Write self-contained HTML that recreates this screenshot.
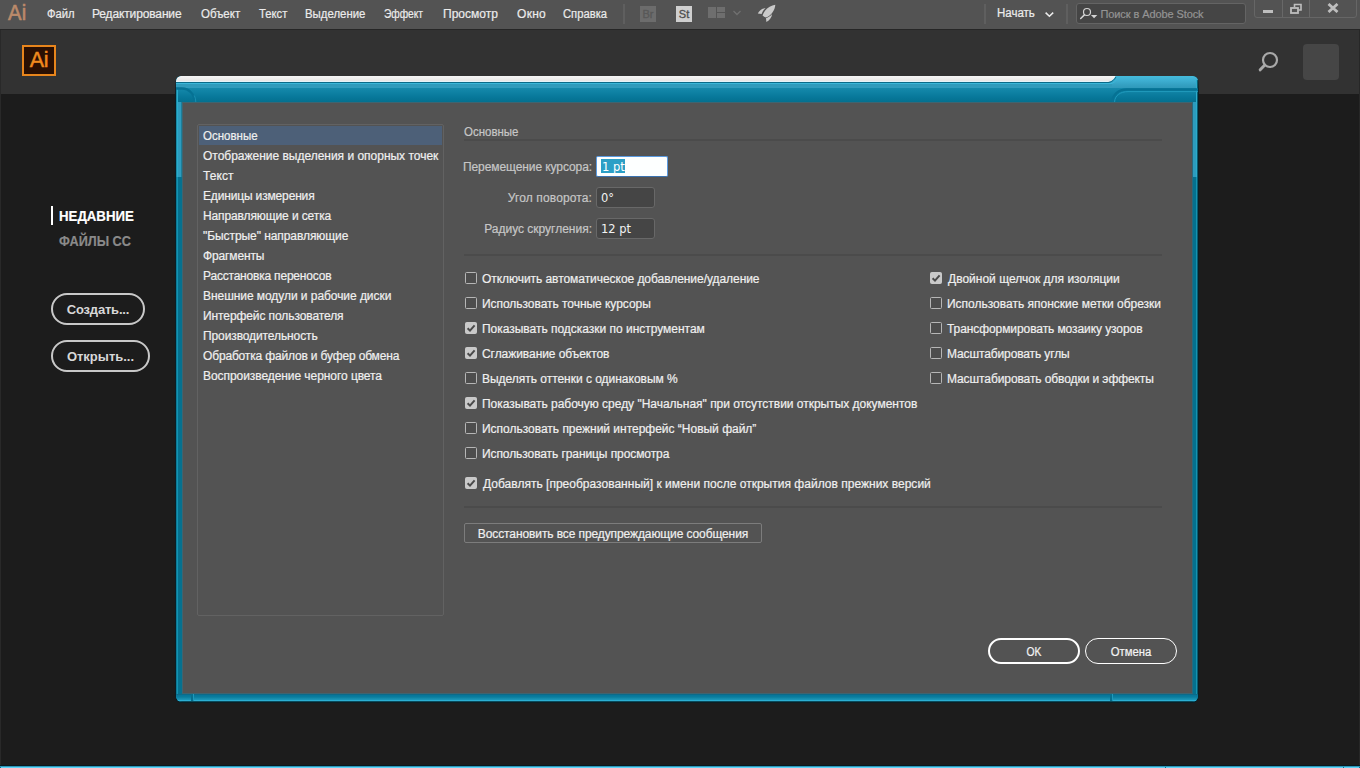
<!DOCTYPE html>
<html lang="ru">
<head>
<meta charset="utf-8">
<title>Adobe Illustrator — Установки</title>
<style>
*{box-sizing:border-box;margin:0;padding:0}
html,body{width:1360px;height:768px;overflow:hidden;background:#1c1c1c}
body{position:relative;font-family:"Liberation Sans","DejaVu Sans",sans-serif;font-size:12px;color:#e8e8e8}
.a{position:absolute}
.t{position:absolute;white-space:nowrap;line-height:14px;height:14px;font-size:12px;-webkit-text-stroke:0.2px}
#menubar{position:absolute;left:0;top:0;width:1360px;height:29px;background:#535353}
#menuline{position:absolute;left:0;top:29px;width:1360px;height:1px;background:#262626}
.mi{color:#ebebeb}
.sep{position:absolute;top:4px;width:2px;height:20px;background:#5f5f5f}
#header{position:absolute;left:0;top:30px;width:1360px;height:64px;background:#323232}
.pill{position:absolute;border:2px solid #c8c8c8;border-radius:16px;height:32px;color:#d8d8d8;font-weight:bold;font-size:13px;text-align:center;line-height:30px;letter-spacing:-0.2px}
#dlg{position:absolute;left:175px;top:76px;width:1024px;height:627px;border-radius:6px 6px 7px 7px;overflow:hidden;background:linear-gradient(#323232 0,#1a2a30 8px,#0a1e24 20px)}
#dlgbody{position:absolute;left:182px;top:102px;width:1011px;height:592px;background:#535353;border:1px solid #3f6470;border-right-color:#2a687c}
.cb{position:absolute;width:12px;height:12px;border:1px solid #b6b6b6;border-radius:1.5px;background:#4d4d4d}
.cb.on{background:#c9c9c9;border-color:#c9c9c9}
.lbl{color:#c6c6c6}
.hr{position:absolute;height:1px;background:#474747}
.inp{position:absolute;height:21px;border:1px solid #686868;border-radius:3px;background:#454545}
.it{position:absolute;white-space:nowrap;font-family:"DejaVu Sans","Liberation Sans",sans-serif;font-size:11.5px;line-height:14px;color:#f2f2f2}
.btn{position:absolute;height:26px;border-radius:13px;border:1px solid #fff;color:#f4f4f4;text-align:center}
</style>
</head>
<body>
<div id="menubar"></div><div id="menuline"></div><div id="header"></div>
<div class="a" style="left:8px;top:1px;font-size:22px;line-height:24px;color:#bb8a6a;-webkit-text-stroke:0.6px #bb8a6a;letter-spacing:0.3px;transform:scaleX(.92);transform-origin:0 0">Ai</div>
<div class="t mi" style="left:47px;top:7px;transform:scaleX(0.935);transform-origin:0 0;">Файл</div>
<div class="t mi" style="left:92px;top:7px;letter-spacing:-0.139px;">Редактирование</div>
<div class="t mi" style="left:201px;top:7px;transform:scaleX(0.958);transform-origin:0 0;">Объект</div>
<div class="t mi" style="left:259px;top:7px;transform:scaleX(0.9398);transform-origin:0 0;">Текст</div>
<div class="t mi" style="left:305px;top:7px;transform:scaleX(0.9508);transform-origin:0 0;">Выделение</div>
<div class="t mi" style="left:384px;top:7px;transform:scaleX(0.8502);transform-origin:0 0;">Эффект</div>
<div class="t mi" style="left:443px;top:7px;">Просмотр</div>
<div class="t mi" style="left:517px;top:7px;letter-spacing:0.3px;">Окно</div>
<div class="t mi" style="left:563px;top:7px;transform:scaleX(0.9356);transform-origin:0 0;">Справка</div>
<div class="sep" style="left:623px"></div>
<div class="a" style="left:640px;top:6px;width:16px;height:16px;background:#6c6c6c;color:#585858;font-size:11px;-webkit-text-stroke:0.35px #585858;line-height:16px;text-align:center">Br</div>
<div class="a" style="left:676px;top:6px;width:16px;height:16px;background:#cfcfcf;color:#505050;font-size:11px;-webkit-text-stroke:0.35px #505050;line-height:16px;text-align:center">St</div>
<svg class="a" style="left:708px;top:7px" width="18" height="12" viewBox="0 0 18 12"><rect x="0" y="0" width="8" height="11" fill="#6e6e6e"/><rect x="9" y="0" width="8" height="5" fill="#6e6e6e"/><rect x="9" y="6" width="8" height="5" fill="#6e6e6e"/></svg>
<svg class="a" style="left:732px;top:10px" width="10" height="6" viewBox="0 0 10 6"><path d="M1.5 1 L5 4.5 L8.5 1" fill="none" stroke="#707070" stroke-width="1.3"/></svg>
<svg class="a" style="left:757px;top:4px" width="19" height="19" viewBox="0 0 19 19"><path d="M18.3 0.8 C14.5 1.3 10.5 3.6 8 6.8 C6.8 8.4 6 10 5.6 11.6 C6.5 12.6 7.6 13.3 8.9 13.6 C11.5 12.5 14 10.6 15.6 8.2 C17.2 6 18.1 3.5 18.3 0.8 Z" fill="#cacaca"/><path d="M8.6 3.9 C5.2 4.3 2.4 6.3 0.8 9.6 L4.6 10 C5.3 7.8 6.7 5.6 8.6 3.9 Z" fill="#cacaca"/><path d="M15 10 C14.8 13.3 12.8 16.3 9.4 18 L9 14.3 C11.3 13.4 13.5 12 15 10 Z" fill="#cacaca"/></svg>
<div class="sep" style="left:984px"></div>
<div class="t " style="left:997px;top:6px;transform:scaleX(0.9585);transform-origin:0 0;color:#ececec">Начать</div>
<svg class="a" style="left:1044px;top:11px" width="11" height="7" viewBox="0 0 11 7"><path d="M1.6 1.6 L5.4 5.2 L9.2 1.6" fill="none" stroke="#ededed" stroke-width="1.5"/></svg>
<div class="sep" style="left:1066px"></div>
<div class="a" style="left:1076px;top:3px;width:170px;height:21px;background:#454545;border:1px solid #646464;border-radius:3px"></div>
<svg class="a" style="left:1079px;top:5px" width="20" height="16" viewBox="0 0 20 16"><circle cx="8" cy="7" r="3.5" fill="none" stroke="#d4d4d4" stroke-width="1.2"/><path d="M5.4 9.9 L1.7 13.5" stroke="#d4d4d4" stroke-width="1.5" stroke-linecap="round"/><path d="M11.9 10 L18.3 10 L15.1 13.3 Z" fill="#d4d4d4"/></svg>
<div class="t" style="left:1100.5px;top:7px;font-size:11px;color:#949494;letter-spacing:-0.098px;">Поиск в Adobe Stock</div>
<div class="a" style="left:1254px;top:-3px;width:103px;height:21px;border:1px solid #666;border-radius:3px"></div>
<div class="a" style="left:1282px;top:0;width:1px;height:17px;background:#686868"></div>
<div class="a" style="left:1309px;top:0;width:1px;height:17px;background:#686868"></div>
<div class="a" style="left:1263px;top:10px;width:10px;height:3px;background:#bebebe"></div>
<svg class="a" style="left:1290px;top:3px" width="13" height="12" viewBox="0 0 13 12"><path d="M4.5 4 V1.5 H11 V7 H8.5" fill="none" stroke="#bebebe" stroke-width="1.6"/><rect x="1" y="5" width="7" height="5" fill="none" stroke="#bebebe" stroke-width="1.8"/></svg>
<svg class="a" style="left:1327px;top:3px" width="12" height="10" viewBox="0 0 12 10"><path d="M1.5 1 L10.5 9 M10.5 1 L1.5 9" stroke="#bebebe" stroke-width="2.8" fill="none"/></svg>
<div class="a" style="left:22px;top:45px;width:34px;height:31px;background:#2a1003;border:2px solid #e8851c"></div>
<div class="a" style="left:29px;top:48px;width:20px;font-size:21.5px;line-height:24px;color:#f08a1e;-webkit-text-stroke:0.45px #f08a1e;text-align:center;letter-spacing:-0.3px">Ai</div>
<svg class="a" style="left:1256px;top:50px" width="24" height="24" viewBox="0 0 24 24"><circle cx="14" cy="10" r="7" fill="none" stroke="#a9a9a9" stroke-width="2.2"/><path d="M8.6 15.2 L4.2 19.8" stroke="#a9a9a9" stroke-width="3" stroke-linecap="round"/></svg>
<div class="a" style="left:1303px;top:44px;width:36px;height:36px;border-radius:4px;background:#464646"></div>
<div class="a" style="left:51px;top:206px;width:2px;height:19px;background:#fff"></div>
<div class="t" style="left:59px;top:208px;font-size:14px;line-height:16px;height:16px;font-weight:bold;color:#fff;transform:scaleX(.945);transform-origin:0 0">НЕДАВНИЕ</div>
<div class="t" style="left:59px;top:233px;font-size:14px;line-height:16px;height:16px;font-weight:bold;color:#8a8a8a;transform:scaleX(.905);transform-origin:0 0">ФАЙЛЫ CC</div>
<div class="pill" style="left:51px;top:293px;width:94px">Создать...</div>
<div class="pill" style="left:51px;top:340px;width:99px;letter-spacing:0">Открыть...</div>
<div id="dlg">
<div class="a" style="left:1px;top:0;width:1022px;height:626px;border-radius:5px 5px 6px 6px;overflow:hidden;background:#05718f">
<div class="a" style="left:0;top:0;width:1022px;height:26px;background:linear-gradient(#45bbdc 0,#3dadd0 5px,#34a0c2 9px,#2f99ba 12px,#1589ab 12px,#0f82a4 16px,#08789a 21px,#04708f 26px)"></div>
<div class="a" style="left:0;top:26px;width:6px;height:600px;background:linear-gradient(90deg,#0d7a96 0,#0d7a96 1px,#1393b2 1px,#1393b2 2px,#05718f 2px)"></div>
<div class="a" style="left:0;top:8px;width:2px;height:93px;background:linear-gradient(90deg,#1a8aa6 0,#1a8aa6 1px,#2aaccc 1px)"></div>
<div class="a" style="left:2px;top:26px;width:4px;height:75px;background:linear-gradient(90deg,#2d9cbe 0,#2d9cbe 3px,#1b7f9c 3px)"></div>
<div class="a" style="left:1016px;top:26px;width:6px;height:600px;background:linear-gradient(90deg,#05718f 0,#05718f 4px,#1393b2 4px,#1393b2 5px,#0b5a6e 5px)"></div>
<div class="a" style="left:1016px;top:26px;width:6px;height:75px;background:linear-gradient(90deg,#2387a6 0,#2d9cbe 1px,#2d9cbe 4px,#2aaccc 4px,#2aaccc 5px,#0b5a6e 5px)"></div>
<div class="a" style="left:1020px;top:4px;width:2px;height:22px;background:linear-gradient(90deg,#2aaccc 0,#2aaccc 1px,#0b5a6e 1px)"></div>
<div class="a" style="left:0;top:618px;width:1022px;height:8px;background:linear-gradient(#0d6a88 0,#0d6a88 1px,#06759a 1px,#0a7d9d 3px,#1890b2 5px,#1e98b8 6px,#2bafd3 6px,#2bafd3 7px,#0b4a5a 7px)"></div>
<div class="a" style="left:15px;top:618px;width:3px;height:7px;background:linear-gradient(90deg,#06708f 0,#06708f 2px,#1d99bc 2px)"></div>
<div class="a" style="left:934px;top:618px;width:3px;height:7px;background:linear-gradient(90deg,#06708f 0,#06708f 2px,#1d99bc 2px)"></div>
<svg class="a" style="left:0;top:0" width="1022" height="30" viewBox="0 0 1022 30">
<defs><linearGradient id="wb" x1="0" y1="0" x2="0" y2="1"><stop offset="0" stop-color="#f6f6f6"/><stop offset="1" stop-color="#e6e3e2"/></linearGradient></defs>
<path d="M0 6 H931 C935 6 938 3.5 939.5 0 H5 C2 0 0 2 0 6 Z" fill="url(#wb)"/>
<path d="M0 5.5 H932" stroke="#e4f3f9" stroke-width="1" fill="none"/>
<path d="M0 8 H936 V12 H0 Z" fill="#309bbc"/>
<path d="M0 6.5 H933 C936 6 938 4 940 1" stroke="#0b6b89" stroke-width="1" fill="none"/>
<path d="M0 7.5 H935 C937.5 7 939.5 5.5 941 3" stroke="#3bb7d9" stroke-width="1" fill="none"/>
<path d="M0 12.5 H6 C13 12.5 18.5 18 18.5 26" stroke="#067294" stroke-width="2.3" fill="none"/>
<path d="M19.8 26 C19.8 23.5 19.3 21.5 18.3 19.5" stroke="#1f95b8" stroke-width="0.8" fill="none"/>
<path d="M1022 13.5 H951 C942 13.5 936.5 19 936.5 26" stroke="#067294" stroke-width="2.4" fill="none"/>
<path d="M1022 15.6 H952 C944 15.6 938.6 20 938.6 26" stroke="#239dc0" stroke-width="0.9" fill="none"/>
</svg>
</div>
</div>
<div id="dlgbody"></div>
<div class="a" style="left:197px;top:124px;width:247px;height:492px;border:1px solid #626262;border-radius:2px"></div>
<div class="a" style="left:199px;top:126px;width:243px;height:19px;background:#4d6078"></div>
<div class="t " style="left:203px;top:129px;transform:scaleX(0.959);transform-origin:0 0;color:#efefef">Основные</div>
<div class="t " style="left:203px;top:149px;letter-spacing:-0.015px;color:#efefef">Отображение выделения и опорных точек</div>
<div class="t " style="left:203px;top:169px;letter-spacing:0.09px;color:#efefef">Текст</div>
<div class="t " style="left:203px;top:189px;letter-spacing:-0.157px;color:#efefef">Единицы измерения</div>
<div class="t " style="left:203px;top:209px;letter-spacing:-0.114px;color:#efefef">Направляющие и сетка</div>
<div class="t " style="left:203px;top:229px;letter-spacing:-0.069px;color:#efefef">"Быстрые" направляющие</div>
<div class="t " style="left:203px;top:249px;letter-spacing:-0.136px;color:#efefef">Фрагменты</div>
<div class="t " style="left:203px;top:269px;letter-spacing:-0.2px;color:#efefef">Расстановка переносов</div>
<div class="t " style="left:203px;top:289px;letter-spacing:-0.057px;color:#efefef">Внешние модули и рабочие диски</div>
<div class="t " style="left:203px;top:309px;letter-spacing:-0.093px;color:#efefef">Интерфейс пользователя</div>
<div class="t " style="left:203px;top:329px;letter-spacing:-0.106px;color:#efefef">Производительность</div>
<div class="t " style="left:203px;top:349px;letter-spacing:-0.162px;color:#efefef">Обработка файлов и буфер обмена</div>
<div class="t " style="left:203px;top:369px;letter-spacing:-0.064px;color:#efefef">Воспроизведение черного цвета</div>
<div class="t lbl" style="left:464px;top:125px;transform:scaleX(0.9573);transform-origin:0 0;">Основные</div>
<div class="hr" style="left:464px;top:139px;width:698px;height:2px;background:#4b4b4b"></div>
<div class="hr" style="left:464px;top:254px;width:698px;height:2px;background:#4b4b4b"></div>
<div class="hr" style="left:464px;top:506px;width:698px;height:2px;background:#4b4b4b"></div>
<div class="t lbl" style="left:292px;width:300px;text-align:right;top:160px;letter-spacing:-0.086px;">Перемещение курсора:</div>
<div class="t lbl" style="left:292px;width:300px;text-align:right;top:191px;letter-spacing:0.124px;">Угол поворота:</div>
<div class="t lbl" style="left:292px;width:300px;text-align:right;top:222px;letter-spacing:-0.009px;">Радиус скругления:</div>
<div class="a" style="left:596px;top:156px;width:72px;height:21px;background:#fdffff;border:1px solid #5a9ae0;border-bottom:1.5px solid #3a72b0;border-radius:2px"></div>
<div class="a" style="left:601px;top:159px;width:24px;height:14px;background:#2c9fc6"></div>
<div class="it" style="left:602px;top:160px;color:#fff">1 pt</div>
<div class="inp" style="left:596px;top:187px;width:59px"></div>
<div class="it" style="left:601px;top:191px">0°</div>
<div class="inp" style="left:596px;top:218px;width:59px"></div>
<div class="it" style="left:601px;top:222px">12 pt</div>
<div class="cb" style="left:465px;top:272px"></div>
<div class="t " style="left:482px;top:272px;letter-spacing:-0.05px;color:#efefef">Отключить автоматическое добавление/удаление</div>
<div class="cb" style="left:465px;top:297px"></div>
<div class="t " style="left:482px;top:297px;letter-spacing:-0.041px;color:#efefef">Использовать точные курсоры</div>
<div class="cb on" style="left:465px;top:322px"><svg class="a" style="left:-1px;top:-1px" width="12" height="12" viewBox="0 0 12 12"><path d="M2.6 6.2 L5 8.6 L9.6 3.4" fill="none" stroke="#4a4a4a" stroke-width="2"/></svg></div>
<div class="t " style="left:482px;top:322px;letter-spacing:-0.02px;color:#efefef">Показывать подсказки по инструментам</div>
<div class="cb on" style="left:465px;top:347px"><svg class="a" style="left:-1px;top:-1px" width="12" height="12" viewBox="0 0 12 12"><path d="M2.6 6.2 L5 8.6 L9.6 3.4" fill="none" stroke="#4a4a4a" stroke-width="2"/></svg></div>
<div class="t " style="left:482px;top:347px;letter-spacing:-0.057px;color:#efefef">Сглаживание объектов</div>
<div class="cb" style="left:465px;top:372px"></div>
<div class="t " style="left:482px;top:372px;letter-spacing:-0.024px;color:#efefef">Выделять оттенки с одинаковым %</div>
<div class="cb on" style="left:465px;top:397px"><svg class="a" style="left:-1px;top:-1px" width="12" height="12" viewBox="0 0 12 12"><path d="M2.6 6.2 L5 8.6 L9.6 3.4" fill="none" stroke="#4a4a4a" stroke-width="2"/></svg></div>
<div class="t " style="left:482px;top:397px;letter-spacing:-0.017px;color:#efefef">Показывать рабочую среду "Начальная" при отсутствии открытых документов</div>
<div class="cb" style="left:465px;top:422px"></div>
<div class="t " style="left:482px;top:422px;letter-spacing:-0.014px;color:#efefef">Использовать прежний интерфейс “Новый файл”</div>
<div class="cb" style="left:465px;top:447px"></div>
<div class="t " style="left:482px;top:447px;letter-spacing:-0.086px;color:#efefef">Использовать границы просмотра</div>
<div class="cb on" style="left:465px;top:477px"><svg class="a" style="left:-1px;top:-1px" width="12" height="12" viewBox="0 0 12 12"><path d="M2.6 6.2 L5 8.6 L9.6 3.4" fill="none" stroke="#4a4a4a" stroke-width="2"/></svg></div>
<div class="t " style="left:483px;top:477px;letter-spacing:0.015px;color:#efefef">Добавлять [преобразованный] к имени после открытия файлов прежних версий</div>
<div class="cb on" style="left:930px;top:272px"><svg class="a" style="left:-1px;top:-1px" width="12" height="12" viewBox="0 0 12 12"><path d="M2.6 6.2 L5 8.6 L9.6 3.4" fill="none" stroke="#4a4a4a" stroke-width="2"/></svg></div>
<div class="t " style="left:948px;top:272px;letter-spacing:0.012px;color:#efefef">Двойной щелчок для изоляции</div>
<div class="cb" style="left:930px;top:297px"></div>
<div class="t " style="left:947px;top:297px;letter-spacing:-0.006px;color:#efefef">Использовать японские метки обрезки</div>
<div class="cb" style="left:930px;top:322px"></div>
<div class="t " style="left:947px;top:322px;letter-spacing:-0.084px;color:#efefef">Трансформировать мозаику узоров</div>
<div class="cb" style="left:930px;top:347px"></div>
<div class="t " style="left:947px;top:347px;letter-spacing:-0.12px;color:#efefef">Масштабировать углы</div>
<div class="cb" style="left:930px;top:372px"></div>
<div class="t " style="left:947px;top:372px;letter-spacing:-0.092px;color:#efefef">Масштабировать обводки и эффекты</div>
<div class="a" style="left:464px;top:523px;width:298px;height:20px;border:1px solid #7c7c7c;border-radius:2px;background:#535353"></div>
<div class="t" style="left:464px;top:527px;width:298px;text-align:center;color:#efefef;letter-spacing:-0.102px;">Восстановить все предупреждающие сообщения</div>
<div class="btn" style="left:988px;top:638px;width:92px;border-width:2px"></div>
<div class="t" style="left:988px;top:645px;width:92px;text-align:center;color:#f4f4f4;transform:scaleX(0.8591);transform-origin:50% 0;">OK</div>
<div class="btn" style="left:1085px;top:638px;width:92px"></div>
<div class="t" style="left:1085px;top:645px;width:92px;text-align:center;color:#f4f4f4;transform:scaleX(0.9426);transform-origin:50% 0;">Отмена</div>
<div class="a" style="left:0;top:30px;width:1px;height:735px;background:#292929"></div>
<div class="a" style="left:1359px;top:30px;width:1px;height:735px;background:#272727"></div>
<div class="a" style="left:0;top:765px;width:1360px;height:3px;background:linear-gradient(#08191f 0,#08191f 1px,#2c97b8 1px,#2c97b8 2px,#5fd4f7 2px)"></div>
<div class="a" style="left:0px;top:767px;width:1px;height:1px;background:#0f6f8c"></div>
<div class="a" style="left:1165px;top:767px;width:1px;height:1px;background:#0f6f8c"></div>
<div class="a" style="left:1343px;top:767px;width:1px;height:1px;background:#0f6f8c"></div>
<div class="a" style="left:1359px;top:767px;width:1px;height:1px;background:#0f6f8c"></div>
</body>
</html>
